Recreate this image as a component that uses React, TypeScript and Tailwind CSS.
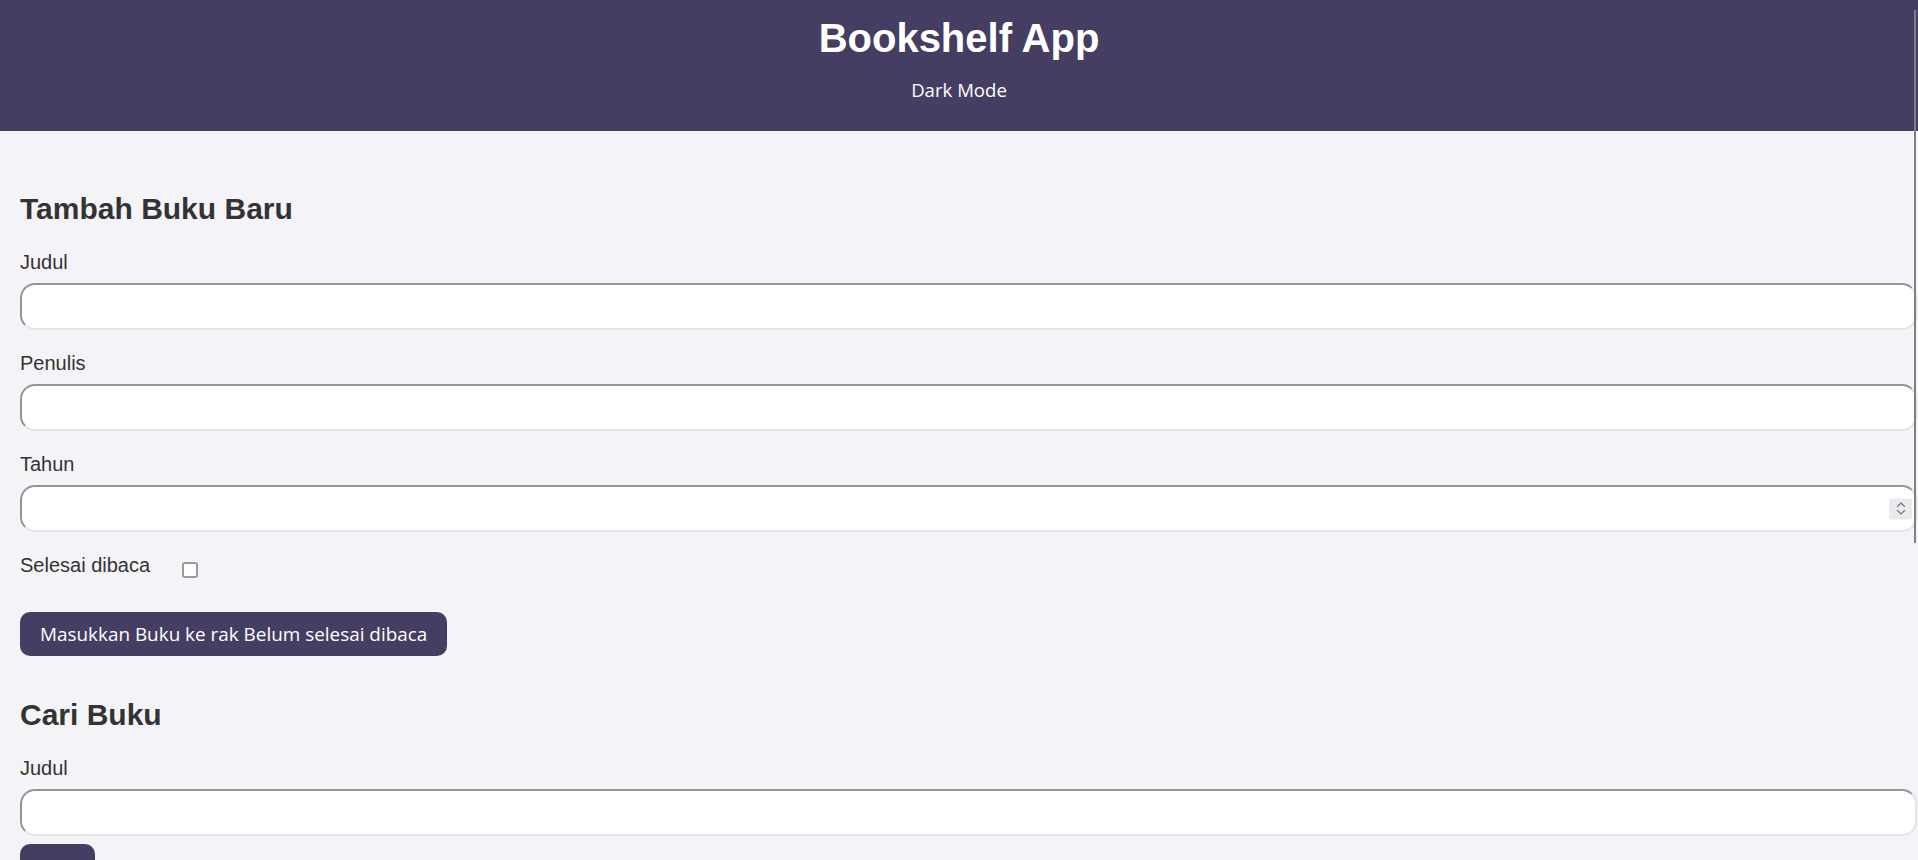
import { useState } from 'react'

const ARIAL = "font-['Liberation_Sans',Arial,sans-serif]"
const BTN_FONT = "font-['Open_Sans','Noto_Sans',sans-serif]"

const inputCls =
  'block w-full h-[47px] rounded-[15px] border-2 border-t-[#959595] border-l-[#959595] border-r-[#e3e3e3] border-b-[#e3e3e3] bg-white pl-[10px] pr-[34px] text-[18px] text-[#333] outline-none [appearance:textfield] [&::-webkit-inner-spin-button]:appearance-none [&::-webkit-outer-spin-button]:appearance-none'

function Spinner() {
  return (
    <span className="absolute right-[5px] top-1/2 -translate-y-1/2 w-[23px] h-[21px] rounded-[3px] bg-[#e9e9ee] flex flex-col items-center justify-center gap-[2px] pointer-events-none">
      <svg width="10" height="6" viewBox="0 0 10 6" fill="none" stroke="#7a7a85" strokeWidth="1.4" strokeLinecap="round" strokeLinejoin="round">
        <path d="M1.5 5L5 1.5L8.5 5" />
      </svg>
      <svg width="10" height="6" viewBox="0 0 10 6" fill="none" stroke="#7a7a85" strokeWidth="1.4" strokeLinecap="round" strokeLinejoin="round">
        <path d="M1.5 1L5 4.5L8.5 1" />
      </svg>
    </span>
  )
}

function Field({ label, type = 'text', value, onChange }: {
  label: string
  type?: string
  value: string
  onChange: (v: string) => void
}) {
  return (
    <div className="mb-[22px]">
      <label className={`block ${ARIAL} text-[20px] leading-[22px] text-[#333] mb-[10px]`}>{label}</label>
      <div className="relative w-[calc(100%+19px)]">
        <input type={type} value={value} onChange={e => onChange(e.target.value)} className={inputCls} />
        {type === 'number' && <Spinner />}
      </div>
    </div>
  )
}

export default function App() {
  const [title, setTitle]   = useState('')
  const [author, setAuthor] = useState('')
  const [year, setYear]     = useState('')
  const [done, setDone]     = useState(false)
  const [query, setQuery]   = useState('')

  return (
    <div className="relative h-screen w-full overflow-hidden bg-[#f4f3f8]">
      {/* Header */}
      <header className="h-[131px] bg-[#453e62] flex flex-col items-center">
        <h1 className={`mt-[18px] ${ARIAL} font-bold text-[40px] leading-[40px] text-white`}>Bookshelf App</h1>
        <button className={`mt-[20px] ${BTN_FONT} text-[18.6px] leading-[24px] text-white bg-transparent`}>
          Dark Mode
        </button>
      </header>

      <main className="px-5">
        {/* Tambah buku */}
        <section className="pt-[63px]">
          <h2 className={`${ARIAL} font-bold text-[30px] leading-[30px] text-[#333] mb-[27px]`}>Tambah Buku Baru</h2>
          <Field label="Judul" value={title} onChange={setTitle} />
          <Field label="Penulis" value={author} onChange={setAuthor} />
          <Field label="Tahun" type="number" value={year} onChange={setYear} />
          <div className="flex items-start gap-[32px]">
            <label className={`${ARIAL} text-[20px] leading-[22px] text-[#333]`}>Selesai dibaca</label>
            <input
              type="checkbox"
              checked={done}
              onChange={e => setDone(e.target.checked)}
              className="mt-[8px] w-[16px] h-[16px] appearance-none rounded-[3px] border-2 border-[#9a9a9a] bg-white checked:bg-[#453e62]"
            />
          </div>
          <button className={`mt-[34px] h-[44px] px-5 rounded-[10px] bg-[#453e62] text-white ${BTN_FONT} text-[18.9px] leading-[24px]`}>
            Masukkan Buku ke rak {done ? 'Selesai dibaca' : 'Belum selesai dibaca'}
          </button>
        </section>

        {/* Cari buku */}
        <section className="pt-[44px]">
          <h2 className={`${ARIAL} font-bold text-[30px] leading-[30px] text-[#333] mb-[27px]`}>Cari Buku</h2>
          <label className={`block ${ARIAL} text-[20px] leading-[22px] text-[#333] mb-[10px]`}>Judul</label>
          <div className="w-[calc(100%+19px)]">
            <input type="text" value={query} onChange={e => setQuery(e.target.value)} className={inputCls} />
          </div>
          <button className={`mt-[8px] h-[44px] px-5 rounded-[10px] bg-[#453e62] text-white ${BTN_FONT} text-[18.9px] leading-[24px]`}>
            Cari
          </button>
        </section>
      </main>

      {/* thin scrollbar thumb */}
      <div className="absolute right-[2px] top-[10px] h-[533px] w-[2px] bg-[#808080]" />
    </div>
  )
}
